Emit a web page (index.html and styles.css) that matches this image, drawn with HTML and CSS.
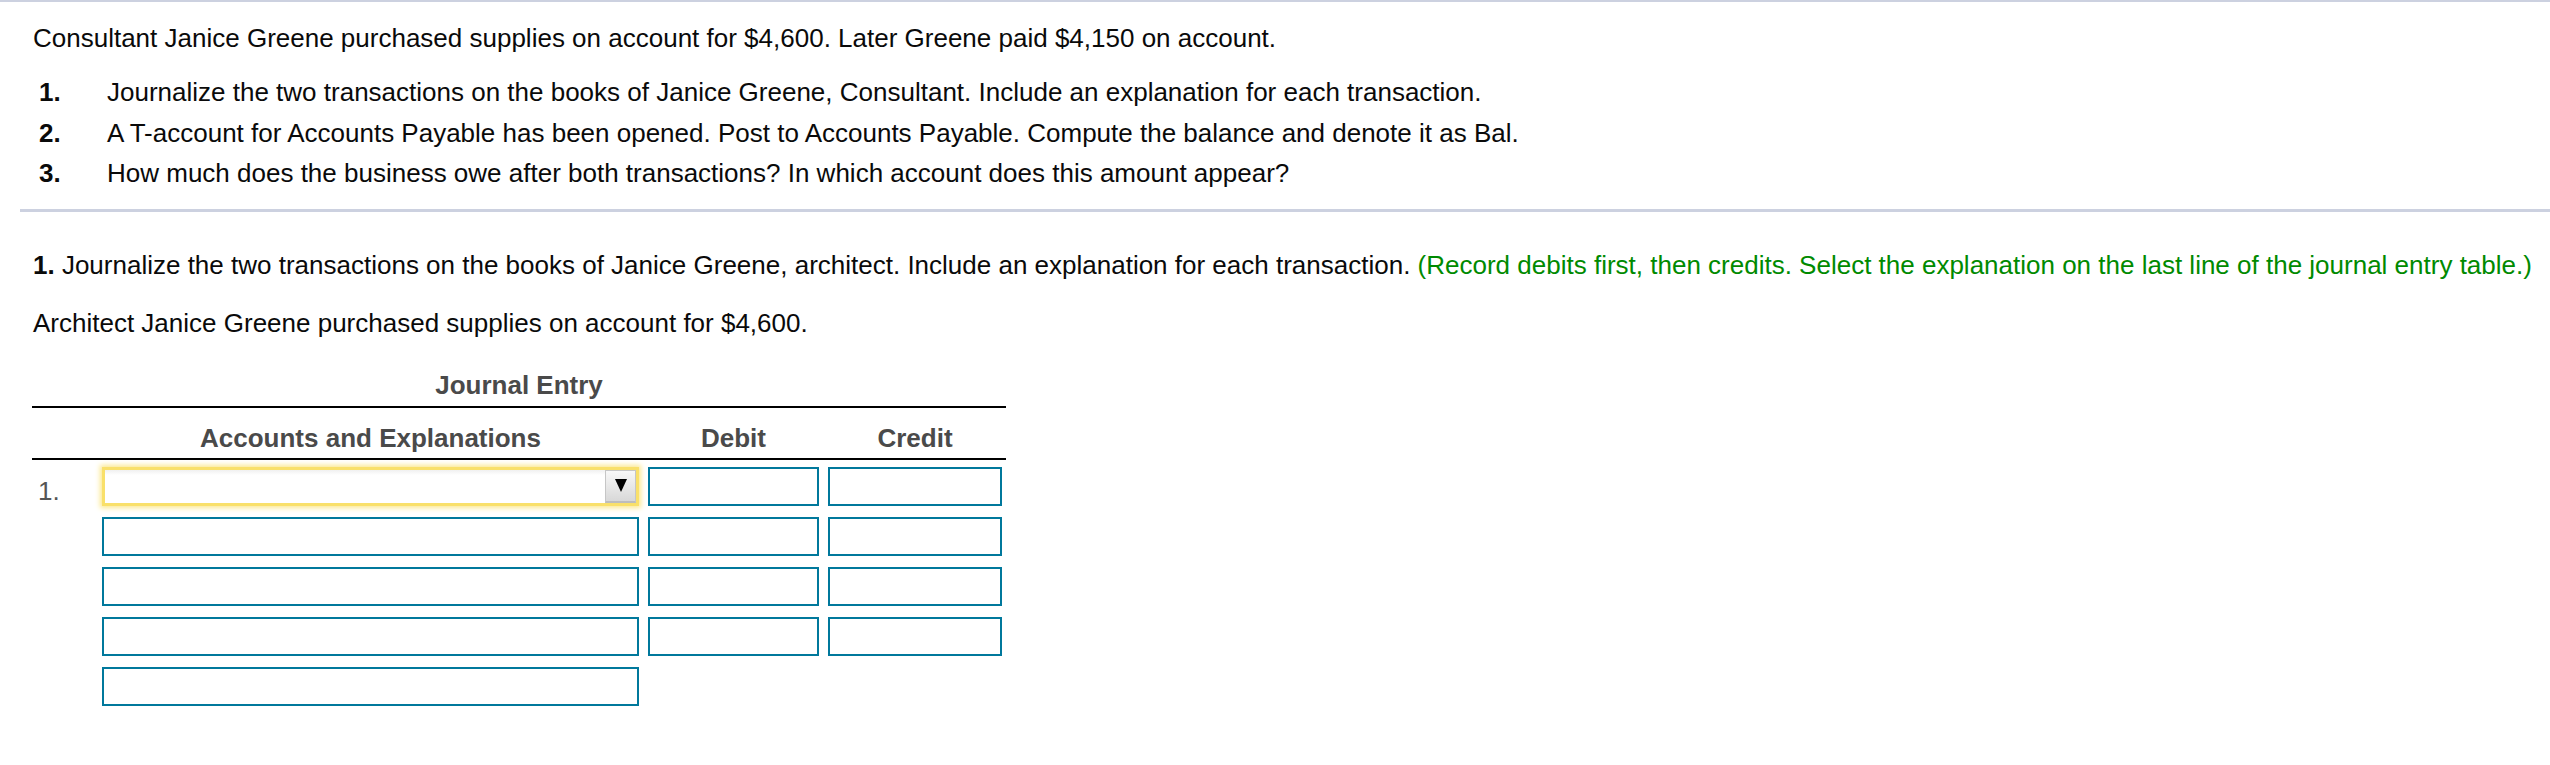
FILE: index.html
```html
<!DOCTYPE html>
<html lang="en">
<head>
<meta charset="utf-8">
<title>Journal Entry</title>
<link rel="stylesheet" href="styles.css">
</head>
<body>
<div class="top-rule"></div>
<p class="intro">Consultant Janice Greene purchased supplies on account for $4,600. Later Greene paid $4,150 on account.</p>
<ol class="tasks">
  <li><span class="num">1.</span><span>Journalize the two transactions on the books of Janice Greene, Consultant. Include an explanation for each transaction.</span></li>
  <li><span class="num">2.</span><span>A T-account for Accounts Payable has been opened. Post to Accounts Payable. Compute the balance and denote it as Bal.</span></li>
  <li><span class="num">3.</span><span>How much does the business owe after both transactions? In which account does this amount appear?</span></li>
</ol>
<div class="divider"></div>
<p class="question"><b>1.</b> Journalize the two transactions on the books of Janice Greene, architect. Include an explanation for each transaction. <span class="hint">(Record debits first, then credits. Select the explanation on the last line of the journal entry table.)</span></p>
<p class="question second">Architect Janice Greene purchased supplies on account for $4,600.</p>

<div class="journal">
  <div class="j-title">Journal Entry</div>
  <div class="j-head">
    <span></span>
    <span>Accounts and Explanations</span>
    <span>Debit</span>
    <span>Credit</span>
  </div>
  <div class="j-rows">
    <span class="rownum">1.</span>
    <div class="select-box"><span class="select-btn"><span class="tri"></span></span></div>
    <div class="field"></div>
    <div class="field"></div>

    <span></span>
    <div class="field"></div>
    <div class="field"></div>
    <div class="field"></div>

    <span></span>
    <div class="field"></div>
    <div class="field"></div>
    <div class="field"></div>

    <span></span>
    <div class="field"></div>
    <div class="field"></div>
    <div class="field"></div>

    <span></span>
    <div class="field"></div>
  </div>
</div>
</body>
</html>
```

FILE: styles.css
```css
html, body {
  margin: 0;
  padding: 0;
  background: #ffffff;
}

body {
  font-family: "Liberation Sans", Arial, sans-serif;
  font-size: 26px;
  color: #0a0a0a;
  width: 2550px;
  overflow: hidden;
}

.top-rule {
  height: 2px;
  background: #ccd1e0;
}

.intro {
  margin: 16px 0 0 33px;
  line-height: 40px;
  white-space: nowrap;
}

.tasks {
  list-style: none;
  margin: 14px 0 0 39px;
  padding: 0;
}

.tasks li {
  display: grid;
  grid-template-columns: 68px 1fr;
  line-height: 40.5px;
  white-space: nowrap;
}

.tasks .num {
  font-weight: bold;
}

.divider {
  margin: 15px 0 0 20px;
  height: 3px;
  background: #ccd1e0;
}

.question {
  margin: 33px 0 0 33px;
  line-height: 40px;
  white-space: nowrap;
}

.question.second {
  margin-top: 18px;
}

.hint {
  color: #008a00;
}

.journal {
  margin: 22px 0 0 32px;
  width: 974px;
}

.j-title {
  text-align: center;
  font-weight: bold;
  color: #4a4a4a;
  line-height: 41px;
  border-bottom: 2px solid #000000;
}

.j-head {
  display: grid;
  grid-template-columns: 61px 537px 171px 174px;
  column-gap: 9px;
  padding-top: 10px;
  line-height: 40px;
  font-weight: bold;
  color: #4a4a4a;
  text-align: center;
  border-bottom: 2px solid #000000;
}

.j-rows {
  display: grid;
  grid-template-columns: 61px 537px 171px 174px;
  column-gap: 9px;
  row-gap: 11px;
  padding-top: 7px;
  grid-auto-rows: 39px;
}

.rownum {
  color: #555555;
  line-height: 41px;
  padding: 4px 0 0 6px;
}

.field {
  box-sizing: border-box;
  border: 2px solid #00789c;
  background: #ffffff;
}

.select-box {
  box-sizing: border-box;
  border: 3px solid #f9e06a;
  box-shadow: 0 0 5px 2px #fbe88f;
  background: linear-gradient(#f0f0f0, #ffffff 5px);
  display: flex;
  justify-content: flex-end;
}

.select-btn {
  width: 31px;
  box-sizing: border-box;
  border: 1px solid #c6c6c6;
  border-bottom: 2px solid #bdbdbd;
  background: linear-gradient(#f8f8f8, #d8d8d8);
  display: flex;
  align-items: center;
  justify-content: center;
}

.tri {
  width: 0;
  height: 0;
  border-left: 6px solid transparent;
  border-right: 6px solid transparent;
  border-top: 13px solid #000000;
}
```
